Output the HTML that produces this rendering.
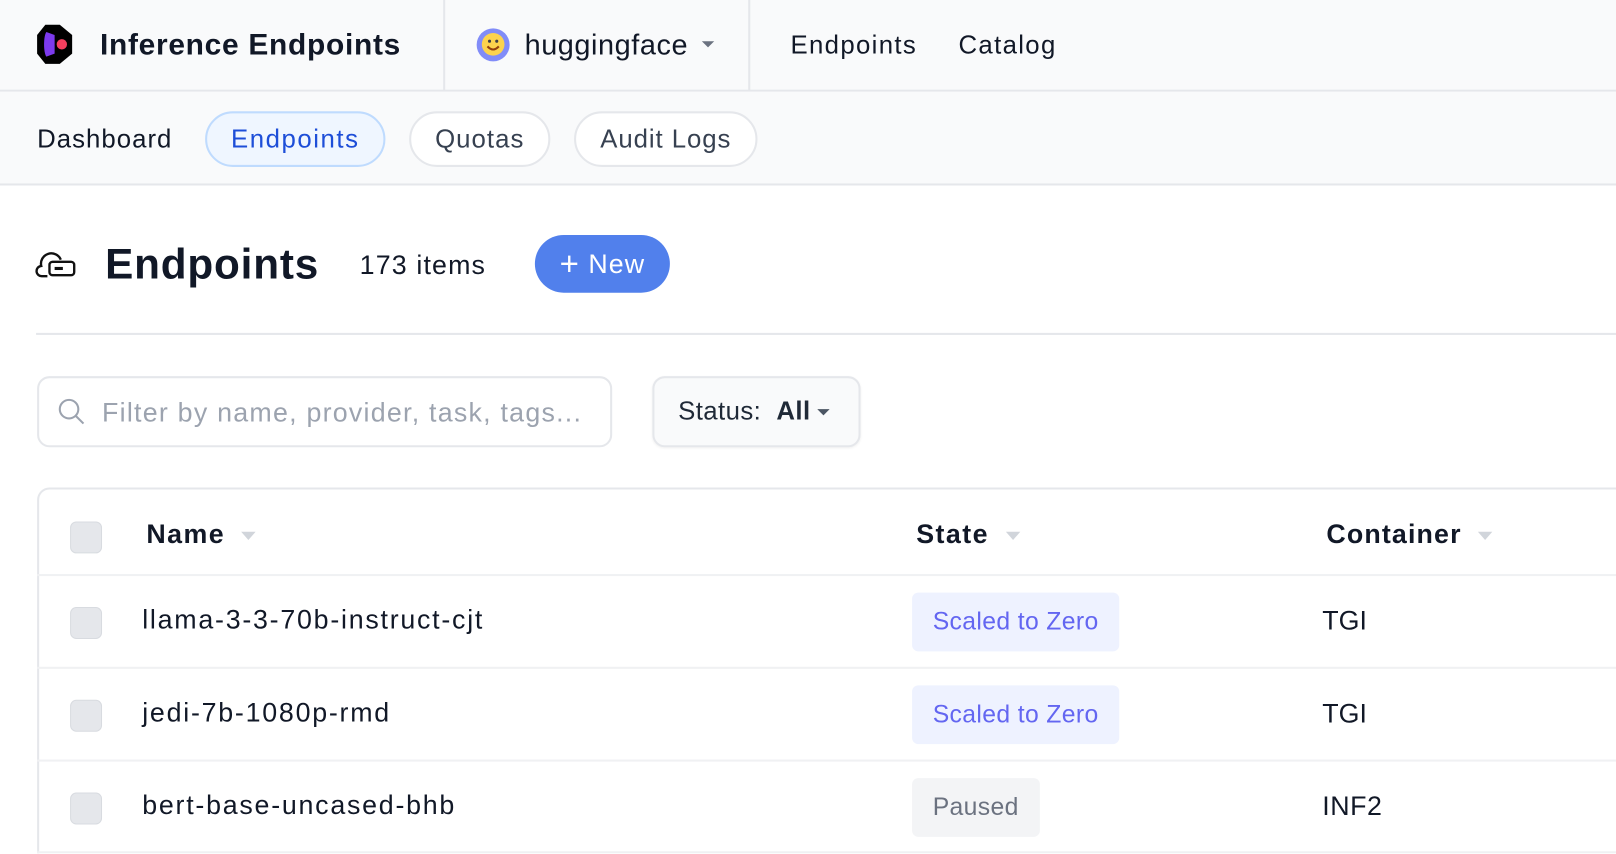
<!DOCTYPE html>
<html style="overflow:hidden;width:1616px;height:854px"><head><meta charset="utf-8"><style>
*{box-sizing:border-box;margin:0;padding:0}
body{width:1616px;height:854px;overflow:hidden;background:#fff;font-family:"Liberation Sans",sans-serif;color:#111827;position:relative}
#w{position:absolute;left:0;top:0;width:1568px;height:828px;overflow:hidden;transform:scale(1.0306);transform-origin:0 0}
.a{position:absolute;white-space:nowrap}
.top{position:absolute;left:0;top:0;width:1580px;height:89px;background:#f9fafb;border-bottom:2px solid #e5e7eb}
.sub{position:absolute;left:0;top:89px;width:1580px;height:91px;background:#f9fafb;border-bottom:2px solid #e5e7eb}
.pill{position:absolute;top:108px;height:54px;border-radius:27px;border:2px solid #e5e7eb;background:#fff;font-size:25px;line-height:50px;text-align:center;color:#374151}
.cb{position:absolute;left:68px;width:31px;height:31px;border-radius:6px;background:#e5e7eb;border:1px solid #d8dbe0}
.row{position:absolute;left:36px;width:1560px;border-top:2px solid #f0f1f3}
.badge{position:absolute;left:885px;height:57px;border-radius:6px;font-size:24px;line-height:57px;padding:0 20px;letter-spacing:0.35px}
.tri{display:inline-block;width:0;height:0;border-left:7px solid transparent;border-right:7px solid transparent;border-top:8px solid #d1d5db;vertical-align:middle;margin-left:16px}
.h{font-size:26px;font-weight:bold;letter-spacing:1.4px}
.n{font-size:26px;letter-spacing:1.7px}
</style></head><body><div id="w">
<div class="top"></div>
<div class="a" style="left:430px;top:0;width:2px;height:88px;background:#e5e7eb"></div>
<div class="a" style="left:726px;top:0;width:2px;height:88px;background:#e5e7eb"></div>
<svg class="a" style="left:34px;top:22px" width="40" height="42" viewBox="0 0 40 42"><path d="M10 2h14l12 10v18L24 40H10L2 30V12z" fill="#000"/><path d="M11 9c-3 4-3 20 0 24l8-3V12z" fill="#7c3aed"/><circle cx="26" cy="21" r="5" fill="#f43f5e"/></svg>
<div class="a" style="left:97px;top:28px;font-size:29px;font-weight:bold;letter-spacing:0.7px">Inference Endpoints</div>
<svg class="a" style="left:462px;top:27px" width="33" height="33" viewBox="0 0 33 33"><circle cx="16.5" cy="16.5" r="16" fill="#818cf8"/><circle cx="16.5" cy="16" r="11" fill="#fcd34d"/><path d="M11 18q5.5 6 11 0" stroke="#92400e" stroke-width="2" fill="none"/><circle cx="13" cy="13" r="1.5" fill="#3f3f46"/><circle cx="20" cy="13" r="1.5" fill="#3f3f46"/></svg>
<div class="a" style="left:509px;top:28px;font-size:28px;letter-spacing:0.55px">huggingface</div>
<div class="a" style="left:681px;top:40px;border-left:6px solid transparent;border-right:6px solid transparent;border-top:6px solid #6b7280"></div>
<div class="a" style="left:767px;top:30px;font-size:25px;letter-spacing:1.3px">Endpoints</div>
<div class="a" style="left:930px;top:30px;font-size:25px;letter-spacing:1.3px">Catalog</div>

<div class="sub"></div>
<div class="a" style="left:36px;top:121px;font-size:25px;letter-spacing:1px">Dashboard</div>
<div class="pill" style="left:199px;width:175px;background:#eff6ff;border-color:#bfdbfe;color:#1d4ed8;letter-spacing:1.5px">Endpoints</div>
<div class="pill" style="left:397px;width:137px;letter-spacing:1px">Quotas</div>
<div class="pill" style="left:557px;width:178px;letter-spacing:0.9px">Audit Logs</div>

<svg class="a" style="left:34px;top:242px" width="40" height="30" viewBox="0 0 40 30"><path d="M12 26H7a5 5 0 0 1-1-10 10 10 0 0 1 19-6" fill="none" stroke="#111" stroke-width="2.3"/><rect x="14" y="12" width="24" height="13" rx="3" fill="none" stroke="#111" stroke-width="2.3"/><rect x="19" y="17" width="8" height="3" fill="#111"/></svg>
<div class="a" style="left:102px;top:233px;font-size:41px;font-weight:bold;letter-spacing:0.8px">Endpoints</div>
<div class="a" style="left:349px;top:242px;font-size:26px;letter-spacing:1.1px">173 items</div>
<div class="a" style="left:519px;top:228px;width:131px;height:56px;border-radius:28px;background:#5180ec;color:#fff;font-size:26px;line-height:56px;text-align:center;letter-spacing:1px"><span style="font-size:32px;vertical-align:-2px">+</span> New</div>
<div class="a" style="left:35px;top:323px;width:1560px;height:2px;background:#e5e7eb"></div>

<div class="a" style="left:36px;top:365px;width:558px;height:69px;border:2px solid #e5e7eb;border-radius:12px"></div>
<svg class="a" style="left:56px;top:386px" width="28" height="28" viewBox="0 0 28 28"><circle cx="11" cy="11" r="9" fill="none" stroke="#9ca3af" stroke-width="2"/><path d="M17.5 17.5L25 25" stroke="#9ca3af" stroke-width="2"/></svg>
<div class="a" style="left:99px;top:385px;font-size:26px;color:#9ca3af;letter-spacing:1.2px">Filter by name, provider, task, tags...</div>
<div class="a" style="left:633px;top:365px;width:202px;height:69px;border:2px solid #e5e7eb;border-radius:12px;background:#f9fafb;box-shadow:0 1px 2px rgba(0,0,0,.05)"></div>
<div class="a" style="left:658px;top:385px;font-size:25px;color:#1f2937;letter-spacing:0.4px">Status:&nbsp; <b>All</b></div>
<div class="a" style="left:793px;top:397px;border-left:6px solid transparent;border-right:6px solid transparent;border-top:6px solid #4b5563"></div>

<div class="a" style="left:36px;top:473px;width:1600px;height:600px;border:2px solid #e5e7eb;border-radius:12px"></div>
<div class="cb" style="top:506px"></div>
<div class="a h" style="left:142px;top:503px">Name<span class="tri"></span></div>
<div class="a h" style="left:889px;top:503px">State<span class="tri"></span></div>
<div class="a h" style="left:1287px;top:503px;letter-spacing:1.1px">Container<span class="tri"></span></div>

<div class="row" style="top:557px"></div>
<div class="cb" style="top:589px"></div>
<div class="a n" style="left:138px;top:586px">llama-3-3-70b-instruct-cjt</div>
<div class="badge" style="top:575px;background:#eef2ff;color:#6366f1">Scaled to Zero</div>
<div class="a" style="left:1283px;top:587px;font-size:26px">TGI</div>

<div class="row" style="top:647px"></div>
<div class="cb" style="top:679px"></div>
<div class="a n" style="left:138px;top:676px">jedi-7b-1080p-rmd</div>
<div class="badge" style="top:665px;background:#eef2ff;color:#6366f1">Scaled to Zero</div>
<div class="a" style="left:1283px;top:677px;font-size:26px">TGI</div>

<div class="row" style="top:737px"></div>
<div class="cb" style="top:769px"></div>
<div class="a n" style="left:138px;top:766px">bert-base-uncased-bhb</div>
<div class="badge" style="top:755px;background:#f3f4f6;color:#6b7280">Paused</div>
<div class="a" style="left:1283px;top:767px;font-size:26px;letter-spacing:0.5px">INF2</div>
<div class="row" style="top:826px"></div>
</div></body></html>
